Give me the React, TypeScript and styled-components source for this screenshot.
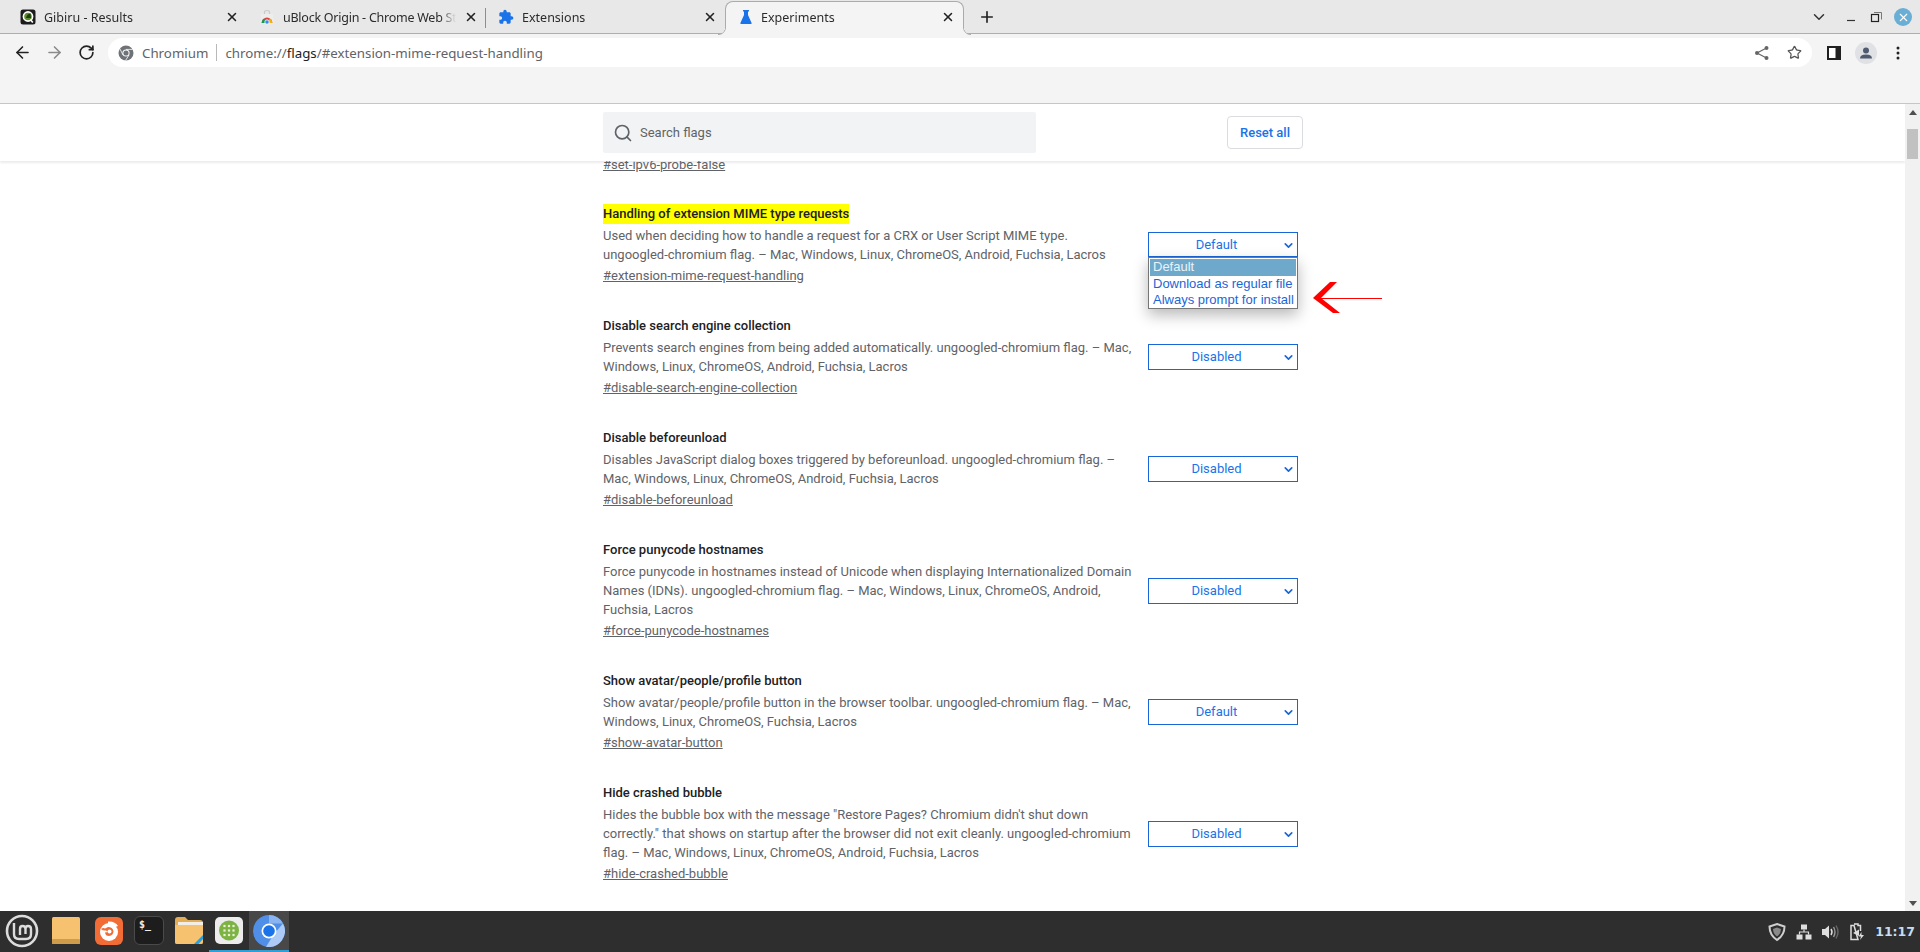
import React from "react";
import styled, { createGlobalStyle } from "styled-components";
import { ArrowLeft, ArrowRight, ChevronDown, Plus, RotateCw, Search, Star, X } from "lucide-react";

const GlobalStyle = createGlobalStyle`
  html, body {
    margin: 0;
    padding: 0;
    height: 100%;
    overflow: hidden;
    background: #fff;
  }
  * {
    box-sizing: border-box;
  }
`;

const Screen = styled.div`
  display: flex;
  flex-direction: column;
  height: 100vh;
  overflow: hidden;
  font-family: Roboto, "Liberation Sans", sans-serif;
`;

const TabStrip = styled.div`
  display: flex;
  align-items: stretch;
  height: 34px;
  padding: 1px 4px 0 8px;
  background: #e8e8e8;
  border-bottom: 1px solid #aeaeae;
  font-family: "Noto Sans", sans-serif;
`;

const Tab = styled.div<{ $active?: boolean; $divider?: boolean }>`
  position: relative;
  display: flex;
  align-items: center;
  flex: none;
  width: 239px;
  padding: 0 8px 0 12px;
  gap: 8px;
  font-size: 12.5px;
  color: #2b2b2b;
  ${(p) =>
    p.$active
      ? `
    height: 34px;
    margin-bottom: -1px;
    padding: 0 8px 3px 12px;
    gap: 7px;
    z-index: 1;
    background: #f4f4f4;
    border: 1px solid #ababab;
    border-bottom: 0;
    border-radius: 8px 8px 0 0;
    &::before, &::after {
      content: "";
      position: absolute;
      bottom: 0;
      width: 8px;
      height: 8px;
    }
    &::before {
      left: -8px;
      background: radial-gradient(circle at 0 0, transparent 7px, #ababab 7.5px, #f4f4f4 8.5px);
    }
    &::after {
      right: -8px;
      background: radial-gradient(circle at 100% 0, transparent 7px, #ababab 7.5px, #f4f4f4 8.5px);
    }
  `
      : ""}
  ${(p) =>
    p.$divider
      ? `
    &::after {
      content: "";
      position: absolute;
      right: 0;
      top: 7px;
      width: 1px;
      height: 20px;
      background: #8e8e8e;
    }
  `
      : ""}
`;

const TabTitle = styled.span<{ $tight?: boolean }>`
  flex: 1;
  min-width: 0;
  white-space: nowrap;
  overflow: hidden;
  letter-spacing: ${(p) => (p.$tight ? "-0.25px" : "0")};
  mask-image: linear-gradient(to right, #000 calc(100% - 16px), transparent);
`;

const TabIcon = styled.svg`
  flex: none;
  width: 16px;
  height: 16px;
`;

const TabClose = styled(X)`
  flex: none;
  width: 14px;
  height: 14px;
  color: #222;
`;

const NewTab = styled.div`
  display: flex;
  align-items: center;
  justify-content: center;
  width: 28px;
  margin-left: 9px;
  color: #222;
`;

const WindowControls = styled.div`
  display: flex;
  align-items: center;
  margin-left: auto;
`;

const WindowButton = styled.div<{ $spaced?: boolean }>`
  display: flex;
  align-items: center;
  justify-content: center;
  width: 26px;
  height: 32px;
  margin-right: ${(p) => (p.$spaced ? "6px" : "0")};
  color: #333;
`;

const CloseCircle = styled.div`
  display: flex;
  align-items: center;
  justify-content: center;
  width: 18px;
  height: 18px;
  border-radius: 50%;
  background: #6aaed6;
  color: #fff;
`;

const Toolbar = styled.div`
  display: flex;
  align-items: flex-start;
  flex: none;
  height: 70px;
  gap: 6px;
  padding: 4px 6px 0;
  background: #f4f4f4;
  border-bottom: 1px solid #c6c6c6;
`;

const NavGroup = styled.div`
  display: flex;
`;

const NavButton = styled.div<{ $muted?: boolean }>`
  display: flex;
  align-items: center;
  justify-content: center;
  width: 32px;
  height: 29px;
  color: ${(p) => (p.$muted ? "#8a8a8a" : "#222")};
`;

const Omnibox = styled.div`
  display: flex;
  align-items: center;
  flex: 1;
  height: 29px;
  padding-left: 10px;
  border-radius: 15px;
  background: #fff;
  font-family: "Noto Sans", sans-serif;
  font-size: 13.3px;
  color: #5f6368;
`;

const SiteName = styled.span`
  margin-left: 8px;
`;

const OmniDivider = styled.span`
  width: 1px;
  height: 17px;
  margin: 0 8px;
  background: #b9b9b9;
`;

const UrlHost = styled.span`
  color: #202124;
`;

const OmniActions = styled.div`
  display: flex;
  margin-left: auto;
  margin-right: 2px;
  color: #5f6368;
`;

const Main = styled.div`
  display: flex;
  flex: 1;
  min-height: 0;
`;

const Page = styled.div`
  flex: 1;
  min-width: 0;
  overflow: hidden;
`;

const Header = styled.div`
  position: relative;
  z-index: 2;
  height: 57px;
  padding-top: 8px;
  background: #fff;
  box-shadow: 0 2px 2px rgba(60, 64, 67, 0.1);
`;

const Column = styled.div`
  width: 701px;
  margin: 0 auto;
`;

const HeaderRow = styled(Column)`
  display: flex;
  align-items: center;
  justify-content: space-between;
`;

const SearchBox = styled.div`
  display: flex;
  align-items: center;
  gap: 7px;
  width: 433px;
  height: 41px;
  padding-left: 10px;
  margin-left: 1px;
  border-radius: 2px;
  background: #f1f3f4;
  font-size: 13px;
  color: #5f6368;
`;

const ResetButton = styled.div`
  display: flex;
  align-items: center;
  justify-content: center;
  width: 76px;
  height: 33px;
  border: 1px solid #dadce0;
  border-radius: 4px;
  font-size: 13px;
  font-weight: 500;
  color: #1a73e8;
`;

const FlagList = styled(Column)`
  margin-top: -8px;
  padding-left: 1px;
`;

const FlagRow = styled.div`
  display: flex;
  align-items: center;
  justify-content: space-between;
  margin-bottom: 30px;
  padding-right: 5px;
`;

const FlagText = styled.div`
  width: 530px;
`;

const FlagTitle = styled.div`
  height: 20px;
  margin-bottom: 2px;
  font-size: 13px;
  line-height: 20px;
  font-weight: 500;
  color: #202124;
`;

const Highlight = styled.span`
  display: inline-block;
  background: #ffff00;
`;

const FlagDesc = styled.div`
  font-size: 13px;
  line-height: 19px;
  color: #5f6368;
`;

const FlagLink = styled.a`
  display: block;
  height: 20px;
  margin-top: 2px;
  font-size: 13px;
  line-height: 20px;
  color: #5f6368;
  text-decoration: underline;
`;

const ScrolledLink = styled(FlagLink)`
  margin-bottom: 29px;
`;

const SelectWrap = styled.div`
  position: relative;
  flex: none;
  width: 150px;
`;

const SelectBox = styled.div<{ $short?: boolean }>`
  position: relative;
  height: ${(p) => (p.$short ? "25px" : "26px")};
  margin-bottom: ${(p) => (p.$short ? "1px" : "0")};
  padding-right: 13px;
  border: 1px solid #1a66d8;
  font-size: 13px;
  line-height: 24px;
  text-align: center;
  color: #1a73e8;
`;

const SelectChevron = styled(ChevronDown)`
  position: absolute;
  right: 2px;
  top: 50%;
  width: 13px;
  height: 13px;
  margin-top: -6px;
  color: #1a66d8;
`;

const Popup = styled.div`
  position: absolute;
  z-index: 3;
  top: 25px;
  left: 0;
  width: 150px;
  padding: 1px 1px 0;
  border: 1px solid #767676;
  background: #fff;
  box-shadow: 0 6px 14px rgba(0, 0, 0, 0.28);
  font-family: "Liberation Sans", sans-serif;
  font-size: 13px;
`;

const PopupOption = styled.div<{ $selected?: boolean }>`
  height: ${(p) => (p.$selected ? "17px" : "16px")};
  padding-left: 3px;
  line-height: 16px;
  white-space: nowrap;
  color: ${(p) => (p.$selected ? "#e9f2f8" : "#1a66d8")};
  background: ${(p) => (p.$selected ? "#6ea9cb" : "transparent")};
`;

const Annotation = styled.svg`
  position: absolute;
  z-index: 3;
  left: 164px;
  top: 49px;
  width: 72px;
  height: 34px;
`;

const Scrollbar = styled.div`
  display: flex;
  flex-direction: column;
  align-items: center;
  flex: none;
  width: 15px;
  background: #f1f1f1;
`;

const ScrollArrow = styled.div<{ $down?: boolean }>`
  flex: none;
  width: 0;
  height: 0;
  margin: ${(p) => (p.$down ? "auto 0 5px" : "6px 0 14px")};
  border-left: 4.5px solid transparent;
  border-right: 4.5px solid transparent;
  border-bottom: ${(p) => (p.$down ? "0" : "5px solid #505050")};
  border-top: ${(p) => (p.$down ? "5px solid #505050" : "0")};
`;

const ScrollThumb = styled.div`
  width: 11px;
  height: 30px;
  background: #c1c1c1;
`;

const Taskbar = styled.div`
  display: flex;
  align-items: center;
  flex: none;
  height: 41px;
  background: #2e2e2e;
`;

const Launcher = styled.div<{ $w: number; $running?: boolean; $focused?: boolean }>`
  display: flex;
  align-items: center;
  justify-content: center;
  flex: none;
  width: ${(p) => p.$w}px;
  height: 41px;
  background: ${(p) => (p.$focused ? "#484848" : "transparent")};
  border-bottom: 2px solid ${(p) => (p.$running ? "#2f9fd8" : "transparent")};
`;

const TermIcon = styled.div`
  width: 30px;
  height: 29px;
  padding: 2px 0 0 4px;
  border: 1px solid #4a4a4a;
  border-radius: 6px;
  background: #1d1d1d;
  font-family: "DejaVu Sans Mono", monospace;
  font-size: 10px;
  font-weight: 700;
  line-height: 12px;
  color: #eee;
`;

const Tray = styled.div`
  display: flex;
  align-items: center;
  margin-left: auto;
  padding-right: 5px;
`;

const TrayItem = styled.div`
  display: flex;
  align-items: center;
  justify-content: center;
  width: 26.5px;
`;

const Clock = styled.div`
  margin-left: 5px;
  font-family: "DejaVu Sans", sans-serif;
  font-size: 12.5px;
  font-weight: 700;
  color: #c5ddf2;
`;

const flags = [
  {
    title: "Disable search engine collection",
    desc: "Prevents search engines from being added automatically. ungoogled-chromium flag. – Mac, Windows, Linux, ChromeOS, Android, Fuchsia, Lacros",
    link: "#disable-search-engine-collection",
    value: "Disabled",
  },
  {
    title: "Disable beforeunload",
    desc: "Disables JavaScript dialog boxes triggered by beforeunload. ungoogled-chromium flag. – Mac, Windows, Linux, ChromeOS, Android, Fuchsia, Lacros",
    link: "#disable-beforeunload",
    value: "Disabled",
  },
  {
    title: "Force punycode hostnames",
    desc: "Force punycode in hostnames instead of Unicode when displaying Internationalized Domain Names (IDNs). ungoogled-chromium flag. – Mac, Windows, Linux, ChromeOS, Android, Fuchsia, Lacros",
    link: "#force-punycode-hostnames",
    value: "Disabled",
  },
  {
    title: "Show avatar/people/profile button",
    desc: "Show avatar/people/profile button in the browser toolbar. ungoogled-chromium flag. – Mac, Windows, Linux, ChromeOS, Fuchsia, Lacros",
    link: "#show-avatar-button",
    value: "Default",
  },
  {
    title: "Hide crashed bubble",
    desc: 'Hides the bubble box with the message "Restore Pages? Chromium didn\'t shut down correctly." that shows on startup after the browser did not exit cleanly. ungoogled-chromium flag. – Mac, Windows, Linux, ChromeOS, Android, Fuchsia, Lacros',
    link: "#hide-crashed-bubble",
    value: "Disabled",
  },
];

const App: React.FC = () => {
  return (
    <Screen>
      <GlobalStyle />
      <TabStrip>
        <Tab>
          <TabIcon viewBox="0 0 16 16">
            <rect x="0.5" y="0.5" width="15" height="15" rx="2.5" fill="#1c1c1c" />
            <circle cx="8" cy="7.5" r="4.6" fill="#5c8f2c" stroke="#fff" strokeWidth="1.6" />
            <path d="M6 9 Q7 5 10.5 4.6 L11 9 Z" fill="#1f3d10" />
            <path d="M10.4 10.6 L12.8 13.6" stroke="#fff" strokeWidth="1.6" />
          </TabIcon>
          <TabTitle>Gibiru - Results</TabTitle>
          <TabClose strokeWidth={2.6} />
        </Tab>
        <Tab $divider>
          <TabIcon viewBox="0 0 16 16">
            <path d="M5.5 5 V3 Q5.5 1.5 8 1.5 Q10.5 1.5 10.5 3 V5" fill="none" stroke="#c9c9c9" strokeWidth="1.2" />
            <path d="M2 5 H14 L14.6 14.5 H1.4 Z" fill="#ededed" />
            <path d="M2.6 14 A5.4 5.4 0 0 1 13.4 14 Z" fill="#db4437" />
            <path d="M2.6 14 A5.4 5.4 0 0 1 5 9.6 L8 14 Z" fill="#0f9d58" />
            <path d="M13.4 14 A5.4 5.4 0 0 0 11 9.6 L8 14 Z" fill="#f4b400" />
            <circle cx="8" cy="13" r="2.2" fill="#4285f4" stroke="#fff" strokeWidth="0.8" />
          </TabIcon>
          <TabTitle $tight>uBlock Origin - Chrome Web Store</TabTitle>
          <TabClose strokeWidth={2.6} />
        </Tab>
        <Tab>
          <TabIcon viewBox="0 0 24 24">
            <path
              fill="#1a73e8"
              d="M20.5 11H19V7c0-1.1-.9-2-2-2h-4V3.5C13 2.12 11.88 1 10.5 1S8 2.12 8 3.5V5H4c-1.1 0-1.99.9-1.99 2v3.8H3.5c1.49 0 2.7 1.21 2.7 2.7s-1.21 2.7-2.7 2.7H2V20c0 1.1.9 2 2 2h3.8v-1.5c0-1.49 1.21-2.7 2.7-2.7 1.49 0 2.7 1.21 2.7 2.7V22H17c1.1 0 2-.9 2-2v-4h1.5c1.38 0 2.5-1.12 2.5-2.5S21.88 11 20.5 11z"
            />
          </TabIcon>
          <TabTitle>Extensions</TabTitle>
          <TabClose strokeWidth={2.6} />
        </Tab>
        <Tab $active>
          <TabIcon viewBox="0 0 16 16">
            <path fill="#1a73e8" d="M5 1 H11 V2.6 H10 V6 L13.6 14 Q14 15 12.9 15 H3.1 Q2 15 2.4 14 L6 6 V2.6 H5 Z" />
          </TabIcon>
          <TabTitle>Experiments</TabTitle>
          <TabClose strokeWidth={2.6} />
        </Tab>
        <NewTab>
          <Plus size={18} strokeWidth={2.2} />
        </NewTab>
        <WindowControls>
          <WindowButton $spaced>
            <ChevronDown size={18} strokeWidth={2} />
          </WindowButton>
          <WindowButton>
            <svg width="16" height="16" viewBox="0 0 16 16">
              <path d="M4 11.5 H12" stroke="#333" strokeWidth="1.2" />
            </svg>
          </WindowButton>
          <WindowButton>
            <svg width="16" height="16" viewBox="0 0 16 16">
              <rect x="2.5" y="5.5" width="7" height="7" fill="none" stroke="#222" strokeWidth="1.2" />
              <path d="M5 3.5 H12.5 V10.5" fill="none" stroke="#777" strokeWidth="1" />
            </svg>
          </WindowButton>
          <WindowButton>
            <CloseCircle>
              <X size={13} strokeWidth={2} />
            </CloseCircle>
          </WindowButton>
        </WindowControls>
      </TabStrip>

      <Toolbar>
        <NavGroup>
          <NavButton>
            <ArrowLeft size={19} strokeWidth={2} />
          </NavButton>
          <NavButton $muted>
            <ArrowRight size={19} strokeWidth={2} />
          </NavButton>
          <NavButton>
            <RotateCw size={17} strokeWidth={2.4} />
          </NavButton>
        </NavGroup>
        <Omnibox>
          <svg width="16" height="16" viewBox="0 0 16 16">
            <circle cx="8" cy="8" r="7.5" fill="#6f7276" />
            <circle cx="8" cy="8" r="3.6" fill="#fff" />
            <circle cx="8" cy="8" r="2.6" fill="#6f7276" />
            <path d="M8 4.4 H14.6 M5 10 L2 4 M11 10 L7.5 15.5" stroke="#fff" strokeWidth="0.8" />
          </svg>
          <SiteName>Chromium</SiteName>
          <OmniDivider />
          <span>
            chrome://<UrlHost>flags</UrlHost>/#extension-mime-request-handling
          </span>
          <OmniActions>
            <NavButton>
              <svg width="16" height="16" viewBox="0 0 16 16">
                <circle cx="12.5" cy="3" r="2" fill="#666" />
                <circle cx="3" cy="8" r="2" fill="#666" />
                <circle cx="12.5" cy="13" r="2" fill="#666" />
                <path d="M12.5 3 L3 8 L12.5 13" fill="none" stroke="#666" strokeWidth="1.2" />
              </svg>
            </NavButton>
            <NavButton>
              <Star size={15} strokeWidth={2} color="#555" />
            </NavButton>
          </OmniActions>
        </Omnibox>
        <NavGroup>
          <NavButton>
            <svg width="14" height="14" viewBox="0 0 14 14">
              <rect width="14" height="14" fill="#202020" />
              <rect x="2" y="2" width="6.5" height="10" fill="#fff" />
            </svg>
          </NavButton>
          <NavButton>
            <svg width="22" height="22" viewBox="0 0 22 22">
              <circle cx="11" cy="11" r="11" fill="#dfe1e5" />
              <circle cx="11" cy="8.6" r="3" fill="#4f5b6e" />
              <path d="M5 16.5 Q5 12.6 11 12.6 Q17 12.6 17 16.5 Z" fill="#4f5b6e" />
            </svg>
          </NavButton>
          <NavButton>
            <svg width="4" height="14" viewBox="0 0 4 14">
              <circle cx="2" cy="2" r="1.5" fill="#222" />
              <circle cx="2" cy="7" r="1.5" fill="#222" />
              <circle cx="2" cy="12" r="1.5" fill="#222" />
            </svg>
          </NavButton>
        </NavGroup>
      </Toolbar>

      <Main>
        <Page>
          <Header>
            <HeaderRow>
              <SearchBox>
                <Search size={20} strokeWidth={2} color="#5f6368" />
                Search flags
              </SearchBox>
              <ResetButton>Reset all</ResetButton>
            </HeaderRow>
          </Header>
          <FlagList>
            <ScrolledLink href="#set-ipv6-probe-false">#set-ipv6-probe-false</ScrolledLink>
            <FlagRow>
              <FlagText>
                <FlagTitle>
                  <Highlight>Handling of extension MIME type requests</Highlight>
                </FlagTitle>
                <FlagDesc>
                  Used when deciding how to handle a request for a CRX or User Script MIME type. ungoogled-chromium flag. – Mac, Windows, Linux, ChromeOS, Android, Fuchsia, Lacros
                </FlagDesc>
                <FlagLink href="#extension-mime-request-handling">#extension-mime-request-handling</FlagLink>
              </FlagText>
              <SelectWrap>
                <SelectBox $short>
                  Default
                  <SelectChevron strokeWidth={3} />
                </SelectBox>
                <Popup>
                  <PopupOption $selected>Default</PopupOption>
                  <PopupOption>Download as regular file</PopupOption>
                  <PopupOption>Always prompt for install</PopupOption>
                </Popup>
                <Annotation viewBox="0 0 72 34">
                  <path d="M8 17.5 H70" stroke="#ff0000" strokeWidth="1" />
                  <path d="M1 17 L18 1 H25 L9 17 L28 32 H21 Z" fill="#ff0000" />
                </Annotation>
              </SelectWrap>
            </FlagRow>
            {flags.map((f) => (
              <FlagRow key={f.link}>
                <FlagText>
                  <FlagTitle>{f.title}</FlagTitle>
                  <FlagDesc>{f.desc}</FlagDesc>
                  <FlagLink href={f.link}>{f.link}</FlagLink>
                </FlagText>
                <SelectWrap>
                  <SelectBox>
                    {f.value}
                    <SelectChevron strokeWidth={3} />
                  </SelectBox>
                </SelectWrap>
              </FlagRow>
            ))}
          </FlagList>
        </Page>
        <Scrollbar>
          <ScrollArrow />
          <ScrollThumb />
          <ScrollArrow $down />
        </Scrollbar>
      </Main>

      <Taskbar>
        <Launcher $w={44}>
          <svg width="34" height="34" viewBox="0 0 34 34" fill="none" stroke="#dcdcdc">
            <circle cx="17" cy="17" r="15" strokeWidth="2.6" />
            <path d="M9 9 V20 Q9 25 14 25 H21 Q26 25 26 20 V15 Q26 12 23 12 Q20.5 12 20.5 15 V20 M20.5 15 Q20.5 12 17.5 12 Q15 12 15 15 V21" strokeWidth="2.4" />
          </svg>
        </Launcher>
        <Launcher $w={44}>
          <svg width="28" height="27" viewBox="0 0 28 27">
            <rect width="28" height="27" rx="1.5" fill="#f6c26f" />
            <rect y="22" width="28" height="5" rx="1" fill="#cf9c4b" />
          </svg>
        </Launcher>
        <Launcher $w={42}>
          <svg width="28" height="28" viewBox="0 0 28 28">
            <rect width="28" height="28" rx="6" fill="#f26d36" />
            <circle cx="14" cy="15" r="9" fill="#fff" />
            <path d="M13 4.5 Q20 4 23 9 L20.5 10 Q18 7.5 13 7.5 Z" fill="#fff" />
            <path d="M6 12 Q8 10.5 10 11.5 L13 10 Q17.5 10 18.5 14 Q18.5 18.5 14 19 Q10.5 19 10 15.5 L13 15 L11 13.5 Q8 14 6 12 Z" fill="#f26d36" />
            <circle cx="14.5" cy="14.5" r="2" fill="#fff" />
          </svg>
        </Launcher>
        <Launcher $w={38}>
          <TermIcon>$_</TermIcon>
        </Launcher>
        <Launcher $w={41}>
          <svg width="28" height="27" viewBox="0 0 28 27">
            <path d="M0 3 Q0 0 3 0 H10 L13 3 H25 Q28 3 28 6 V25 Q28 27 26 27 H2 Q0 27 0 25 Z" fill="#e3ac56" />
            <rect x="3" y="5" width="25" height="3" fill="#f1eee7" />
            <path d="M0 8 H28 V25 Q28 27 26 27 H2 Q0 27 0 25 Z" fill="#f6c26f" />
            <path d="M19 27 L28 18 V22 L23.5 27 Z" fill="#2f9fd8" />
          </svg>
        </Launcher>
        <Launcher $w={40} $running>
          <svg width="28" height="27" viewBox="0 0 28 27">
            <rect width="28" height="27" rx="5" fill="#ececec" />
            <circle cx="14" cy="13.5" r="10" fill="#7db343" />
            {[9.5, 14, 18.5].flatMap((cx) =>
              [9, 13.5, 18].map((cy) => <rect key={`${cx}-${cy}`} x={cx - 1.1} y={cy - 1.1} width="2.2" height="2.2" fill="#e6f1d8" />)
            )}
          </svg>
        </Launcher>
        <Launcher $w={40} $running $focused>
          <svg width="32" height="32" viewBox="0 0 32 32">
            <circle cx="16" cy="16" r="16" fill="#4f8fe8" />
            <path d="M16 0 A16 16 0 0 1 30 8.5 L16 8.5 Z" fill="#8ab4f0" />
            <path d="M30 8.5 A16 16 0 0 1 13 31.7 L21 19 Z" fill="#adc9f5" />
            <circle cx="16" cy="16" r="7.5" fill="#fff" />
            <circle cx="16" cy="16" r="5.8" fill="#1a73e8" />
          </svg>
        </Launcher>
        <Tray>
          <TrayItem>
            <svg width="20" height="20" viewBox="0 0 20 20" fill="none" stroke="#cfcfcf">
              <path d="M10 2 L17.5 4.5 Q17.5 13 10 18 Q2.5 13 2.5 4.5 Z" strokeWidth="2" />
              <path d="M6 7 L10 5.5 L14 7 Q14 11.5 10 14.5 Q6 11.5 6 7 Z" fill="#8a8a8a" stroke="none" />
            </svg>
          </TrayItem>
          <TrayItem>
            <svg width="16" height="16" viewBox="0 0 16 16" fill="#dedede">
              <rect x="5" y="0.5" width="6" height="5" />
              <rect x="0.5" y="10.5" width="6" height="5" />
              <rect x="9.5" y="10.5" width="6" height="5" />
              <path d="M8 5.5 V8 M3.5 10.5 V8 H12.5 V10.5" fill="none" stroke="#dedede" strokeWidth="1.2" />
            </svg>
          </TrayItem>
          <TrayItem>
            <svg width="18" height="16" viewBox="0 0 18 16" fill="none">
              <path d="M1 5 H4 L8 1.5 V14.5 L4 11 H1 Z" fill="#dedede" />
              <path d="M10 5 Q12 8 10 11" stroke="#dedede" strokeWidth="1.5" />
              <path d="M12.5 3 Q15.5 8 12.5 13" stroke="#9a9a9a" strokeWidth="1.4" />
              <path d="M15 1.5 Q19 8 15 14.5" stroke="#666" strokeWidth="1.4" />
            </svg>
          </TrayItem>
          <TrayItem>
            <svg width="16" height="18" viewBox="0 0 16 18" fill="none">
              <path d="M5 1 H9 V2.5 H11.5 V8 M9 16.5 H2 V2.5 H5 Z" stroke="#dedede" strokeWidth="1.5" />
              <path d="M4 10 L10 6.5 V13 Z" fill="#dedede" />
              <path d="M12.5 9 L9.5 13.5 H12 L11 17 L15 12 H12.5 Z" fill="#dedede" />
            </svg>
          </TrayItem>
          <Clock>11:17</Clock>
        </Tray>
      </Taskbar>
    </Screen>
  );
};

export default App;
